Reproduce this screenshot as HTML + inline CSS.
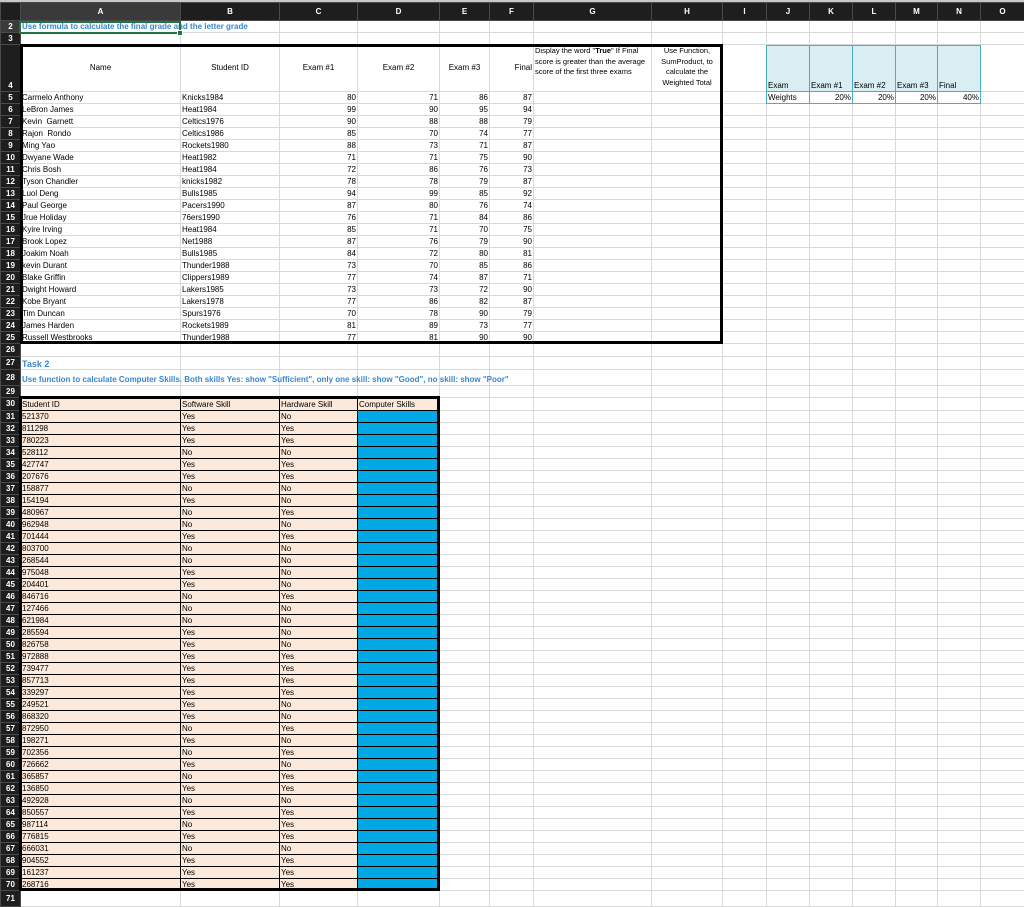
<!DOCTYPE html>
<html><head><meta charset="utf-8"><style>
*{box-sizing:border-box}
body{margin:0;width:1024px;height:904px;overflow:hidden;background:#fff;font-family:"Liberation Sans",sans-serif;font-size:8px;color:#000;position:relative}
table{border-collapse:collapse;table-layout:fixed;position:absolute;left:0;top:2px;width:1024px}
td,th{border:1px solid #d9d9d9;padding:0 1px;white-space:nowrap;overflow:visible;line-height:10px;vertical-align:bottom;max-width:0}
th{background:#1e1e1e;color:#fff;font-weight:bold;border-color:#4a4a4a;text-align:center;vertical-align:middle}
tr.h th{height:18px}
tr{height:12px}
tr.t1 td:nth-child(4),tr.t1 td:nth-child(5),tr.t1 td:nth-child(6),tr.t1 td:nth-child(7){text-align:right}
td.p{background:#fde9d9;border-color:#000}
td.b{background:#00a8e6;border-color:#000}
td.c{background:#d9eef3;border-color:#4bacc6;vertical-align:bottom}
td.w{border-color:#4bacc6}
td.r{text-align:right}
.blue{color:#3a86cc;font-weight:bold}
.box{position:absolute;border:3px solid #000}
</style></head><body>
<div style="position:absolute;left:0;top:0;width:1024px;height:2px;background:#c8c8c8"></div>
<table>
<colgroup><col style="width:20px"><col style="width:160px"><col style="width:99px"><col style="width:78px"><col style="width:82px"><col style="width:50px"><col style="width:44px"><col style="width:118px"><col style="width:71px"><col style="width:44px"><col style="width:43px"><col style="width:43px"><col style="width:43px"><col style="width:42px"><col style="width:43px"><col style="width:44px"></colgroup>
<tr class="h"><th></th><th style="background:#3a3a3a">A</th><th>B</th><th>C</th><th>D</th><th>E</th><th>F</th><th>G</th><th>H</th><th>I</th><th>J</th><th>K</th><th>L</th><th>M</th><th>N</th><th>O</th></tr>
<tr><th style="background:#3a3a3a">2</th><td class="blue">Use formula to calculate the final grade and the letter grade</td><td></td><td></td><td></td><td></td><td></td><td></td><td></td><td></td><td></td><td></td><td></td><td></td><td></td><td></td></tr>
<tr><th>3</th><td></td><td></td><td></td><td></td><td></td><td></td><td></td><td></td><td></td><td></td><td></td><td></td><td></td><td></td><td></td></tr>
<tr style="height:47px"><th style="vertical-align:bottom">4</th><td style="text-align:center;vertical-align:middle">Name</td><td style="text-align:center;vertical-align:middle">Student ID</td><td style="text-align:center;vertical-align:middle">Exam #1</td><td style="text-align:center;vertical-align:middle">Exam #2</td><td style="text-align:center;vertical-align:middle">Exam #3</td><td style="text-align:right;vertical-align:middle">Final</td><td style="white-space:normal;vertical-align:top;line-height:10.5px;padding-top:1px;font-size:7.5px">Display the word "<b>True</b>" If Final score is greater than the average score of the first three exams</td><td style="white-space:normal;text-align:center;vertical-align:top;line-height:10.5px;padding-top:1px;font-size:7.5px">Use Function, SumProduct, to calculate the Weighted Total</td><td></td><td class="c">Exam</td><td class="c">Exam #1</td><td class="c">Exam #2</td><td class="c">Exam #3</td><td class="c">Final</td><td></td></tr>
<tr class="t1"><th>5</th><td>Carmelo Anthony</td><td>Knicks1984</td><td>80</td><td>71</td><td>86</td><td>87</td><td></td><td></td><td></td><td class="w">Weights</td><td class="w r">20%</td><td class="w r">20%</td><td class="w r">20%</td><td class="w r">40%</td><td></td></tr>
<tr class="t1"><th>6</th><td>LeBron James</td><td>Heat1984</td><td>99</td><td>90</td><td>95</td><td>94</td><td></td><td></td><td></td><td></td><td></td><td></td><td></td><td></td><td></td></tr>
<tr class="t1"><th>7</th><td>Kevin &nbsp;Garnett</td><td>Celtics1976</td><td>90</td><td>88</td><td>88</td><td>79</td><td></td><td></td><td></td><td></td><td></td><td></td><td></td><td></td><td></td></tr>
<tr class="t1"><th>8</th><td>Rajon &nbsp;Rondo</td><td>Celtics1986</td><td>85</td><td>70</td><td>74</td><td>77</td><td></td><td></td><td></td><td></td><td></td><td></td><td></td><td></td><td></td></tr>
<tr class="t1"><th>9</th><td>Ming Yao</td><td>Rockets1980</td><td>88</td><td>73</td><td>71</td><td>87</td><td></td><td></td><td></td><td></td><td></td><td></td><td></td><td></td><td></td></tr>
<tr class="t1"><th>10</th><td>Dwyane Wade</td><td>Heat1982</td><td>71</td><td>71</td><td>75</td><td>90</td><td></td><td></td><td></td><td></td><td></td><td></td><td></td><td></td><td></td></tr>
<tr class="t1"><th>11</th><td>Chris Bosh</td><td>Heat1984</td><td>72</td><td>86</td><td>76</td><td>73</td><td></td><td></td><td></td><td></td><td></td><td></td><td></td><td></td><td></td></tr>
<tr class="t1"><th>12</th><td>Tyson Chandler</td><td>knicks1982</td><td>78</td><td>78</td><td>79</td><td>87</td><td></td><td></td><td></td><td></td><td></td><td></td><td></td><td></td><td></td></tr>
<tr class="t1"><th>13</th><td>Luol Deng</td><td>Bulls1985</td><td>94</td><td>99</td><td>85</td><td>92</td><td></td><td></td><td></td><td></td><td></td><td></td><td></td><td></td><td></td></tr>
<tr class="t1"><th>14</th><td>Paul George</td><td>Pacers1990</td><td>87</td><td>80</td><td>76</td><td>74</td><td></td><td></td><td></td><td></td><td></td><td></td><td></td><td></td><td></td></tr>
<tr class="t1"><th>15</th><td>Jrue Holiday</td><td>76ers1990</td><td>76</td><td>71</td><td>84</td><td>86</td><td></td><td></td><td></td><td></td><td></td><td></td><td></td><td></td><td></td></tr>
<tr class="t1"><th>16</th><td>Kyire Irving</td><td>Heat1984</td><td>85</td><td>71</td><td>70</td><td>75</td><td></td><td></td><td></td><td></td><td></td><td></td><td></td><td></td><td></td></tr>
<tr class="t1"><th>17</th><td>Brook Lopez</td><td>Net1988</td><td>87</td><td>76</td><td>79</td><td>90</td><td></td><td></td><td></td><td></td><td></td><td></td><td></td><td></td><td></td></tr>
<tr class="t1"><th>18</th><td>Joakim Noah</td><td>Bulls1985</td><td>84</td><td>72</td><td>80</td><td>81</td><td></td><td></td><td></td><td></td><td></td><td></td><td></td><td></td><td></td></tr>
<tr class="t1"><th>19</th><td>kevin Durant</td><td>Thunder1988</td><td>73</td><td>70</td><td>85</td><td>86</td><td></td><td></td><td></td><td></td><td></td><td></td><td></td><td></td><td></td></tr>
<tr class="t1"><th>20</th><td>Blake Griffin</td><td>Clippers1989</td><td>77</td><td>74</td><td>87</td><td>71</td><td></td><td></td><td></td><td></td><td></td><td></td><td></td><td></td><td></td></tr>
<tr class="t1"><th>21</th><td>Dwight Howard</td><td>Lakers1985</td><td>73</td><td>73</td><td>72</td><td>90</td><td></td><td></td><td></td><td></td><td></td><td></td><td></td><td></td><td></td></tr>
<tr class="t1"><th>22</th><td>Kobe Bryant</td><td>Lakers1978</td><td>77</td><td>86</td><td>82</td><td>87</td><td></td><td></td><td></td><td></td><td></td><td></td><td></td><td></td><td></td></tr>
<tr class="t1"><th>23</th><td>Tim Duncan</td><td>Spurs1976</td><td>70</td><td>78</td><td>90</td><td>79</td><td></td><td></td><td></td><td></td><td></td><td></td><td></td><td></td><td></td></tr>
<tr class="t1"><th>24</th><td>James Harden</td><td>Rockets1989</td><td>81</td><td>89</td><td>73</td><td>77</td><td></td><td></td><td></td><td></td><td></td><td></td><td></td><td></td><td></td></tr>
<tr class="t1"><th>25</th><td>Russell Westbrooks</td><td>Thunder1988</td><td>77</td><td>81</td><td>90</td><td>90</td><td></td><td></td><td></td><td></td><td></td><td></td><td></td><td></td><td></td></tr>
<tr style="height:13px"><th>26</th><td></td><td></td><td></td><td></td><td></td><td></td><td></td><td></td><td></td><td></td><td></td><td></td><td></td><td></td><td></td></tr>
<tr style="height:13px"><th>27</th><td class="blue" style="font-size:9px">Task 2</td><td></td><td></td><td></td><td></td><td></td><td></td><td></td><td></td><td></td><td></td><td></td><td></td><td></td><td></td></tr>
<tr style="height:16px"><th>28</th><td class="blue">Use function to calculate Computer Skills. Both skills Yes: show "Sufficient", only one skill: show "Good", no skill: show "Poor"</td><td></td><td></td><td></td><td></td><td></td><td></td><td></td><td></td><td></td><td></td><td></td><td></td><td></td><td></td></tr>
<tr><th>29</th><td></td><td></td><td></td><td></td><td></td><td></td><td></td><td></td><td></td><td></td><td></td><td></td><td></td><td></td><td></td></tr>
<tr style="height:13px"><th>30</th><td class="p">Student ID</td><td class="p">Software Skill</td><td class="p">Hardware Skill</td><td class="p">Computer Skills</td><td></td><td></td><td></td><td></td><td></td><td></td><td></td><td></td><td></td><td></td><td></td></tr>
<tr><th>31</th><td class="p">521370</td><td class="p">Yes</td><td class="p">No</td><td class="b"></td><td></td><td></td><td></td><td></td><td></td><td></td><td></td><td></td><td></td><td></td><td></td></tr>
<tr><th>32</th><td class="p">811298</td><td class="p">Yes</td><td class="p">Yes</td><td class="b"></td><td></td><td></td><td></td><td></td><td></td><td></td><td></td><td></td><td></td><td></td><td></td></tr>
<tr><th>33</th><td class="p">780223</td><td class="p">Yes</td><td class="p">Yes</td><td class="b"></td><td></td><td></td><td></td><td></td><td></td><td></td><td></td><td></td><td></td><td></td><td></td></tr>
<tr><th>34</th><td class="p">528112</td><td class="p">No</td><td class="p">No</td><td class="b"></td><td></td><td></td><td></td><td></td><td></td><td></td><td></td><td></td><td></td><td></td><td></td></tr>
<tr><th>35</th><td class="p">427747</td><td class="p">Yes</td><td class="p">Yes</td><td class="b"></td><td></td><td></td><td></td><td></td><td></td><td></td><td></td><td></td><td></td><td></td><td></td></tr>
<tr><th>36</th><td class="p">207676</td><td class="p">Yes</td><td class="p">Yes</td><td class="b"></td><td></td><td></td><td></td><td></td><td></td><td></td><td></td><td></td><td></td><td></td><td></td></tr>
<tr><th>37</th><td class="p">158877</td><td class="p">No</td><td class="p">No</td><td class="b"></td><td></td><td></td><td></td><td></td><td></td><td></td><td></td><td></td><td></td><td></td><td></td></tr>
<tr><th>38</th><td class="p">154194</td><td class="p">Yes</td><td class="p">No</td><td class="b"></td><td></td><td></td><td></td><td></td><td></td><td></td><td></td><td></td><td></td><td></td><td></td></tr>
<tr><th>39</th><td class="p">480967</td><td class="p">No</td><td class="p">Yes</td><td class="b"></td><td></td><td></td><td></td><td></td><td></td><td></td><td></td><td></td><td></td><td></td><td></td></tr>
<tr><th>40</th><td class="p">962948</td><td class="p">No</td><td class="p">No</td><td class="b"></td><td></td><td></td><td></td><td></td><td></td><td></td><td></td><td></td><td></td><td></td><td></td></tr>
<tr><th>41</th><td class="p">701444</td><td class="p">Yes</td><td class="p">Yes</td><td class="b"></td><td></td><td></td><td></td><td></td><td></td><td></td><td></td><td></td><td></td><td></td><td></td></tr>
<tr><th>42</th><td class="p">803700</td><td class="p">No</td><td class="p">No</td><td class="b"></td><td></td><td></td><td></td><td></td><td></td><td></td><td></td><td></td><td></td><td></td><td></td></tr>
<tr><th>43</th><td class="p">268544</td><td class="p">No</td><td class="p">No</td><td class="b"></td><td></td><td></td><td></td><td></td><td></td><td></td><td></td><td></td><td></td><td></td><td></td></tr>
<tr><th>44</th><td class="p">975048</td><td class="p">Yes</td><td class="p">No</td><td class="b"></td><td></td><td></td><td></td><td></td><td></td><td></td><td></td><td></td><td></td><td></td><td></td></tr>
<tr><th>45</th><td class="p">204401</td><td class="p">Yes</td><td class="p">No</td><td class="b"></td><td></td><td></td><td></td><td></td><td></td><td></td><td></td><td></td><td></td><td></td><td></td></tr>
<tr><th>46</th><td class="p">846716</td><td class="p">No</td><td class="p">Yes</td><td class="b"></td><td></td><td></td><td></td><td></td><td></td><td></td><td></td><td></td><td></td><td></td><td></td></tr>
<tr><th>47</th><td class="p">127466</td><td class="p">No</td><td class="p">No</td><td class="b"></td><td></td><td></td><td></td><td></td><td></td><td></td><td></td><td></td><td></td><td></td><td></td></tr>
<tr><th>48</th><td class="p">621984</td><td class="p">No</td><td class="p">No</td><td class="b"></td><td></td><td></td><td></td><td></td><td></td><td></td><td></td><td></td><td></td><td></td><td></td></tr>
<tr><th>49</th><td class="p">285594</td><td class="p">Yes</td><td class="p">No</td><td class="b"></td><td></td><td></td><td></td><td></td><td></td><td></td><td></td><td></td><td></td><td></td><td></td></tr>
<tr><th>50</th><td class="p">826758</td><td class="p">Yes</td><td class="p">No</td><td class="b"></td><td></td><td></td><td></td><td></td><td></td><td></td><td></td><td></td><td></td><td></td><td></td></tr>
<tr><th>51</th><td class="p">972888</td><td class="p">Yes</td><td class="p">Yes</td><td class="b"></td><td></td><td></td><td></td><td></td><td></td><td></td><td></td><td></td><td></td><td></td><td></td></tr>
<tr><th>52</th><td class="p">739477</td><td class="p">Yes</td><td class="p">Yes</td><td class="b"></td><td></td><td></td><td></td><td></td><td></td><td></td><td></td><td></td><td></td><td></td><td></td></tr>
<tr><th>53</th><td class="p">857713</td><td class="p">Yes</td><td class="p">Yes</td><td class="b"></td><td></td><td></td><td></td><td></td><td></td><td></td><td></td><td></td><td></td><td></td><td></td></tr>
<tr><th>54</th><td class="p">339297</td><td class="p">Yes</td><td class="p">Yes</td><td class="b"></td><td></td><td></td><td></td><td></td><td></td><td></td><td></td><td></td><td></td><td></td><td></td></tr>
<tr><th>55</th><td class="p">249521</td><td class="p">Yes</td><td class="p">No</td><td class="b"></td><td></td><td></td><td></td><td></td><td></td><td></td><td></td><td></td><td></td><td></td><td></td></tr>
<tr><th>56</th><td class="p">868320</td><td class="p">Yes</td><td class="p">No</td><td class="b"></td><td></td><td></td><td></td><td></td><td></td><td></td><td></td><td></td><td></td><td></td><td></td></tr>
<tr><th>57</th><td class="p">872950</td><td class="p">No</td><td class="p">Yes</td><td class="b"></td><td></td><td></td><td></td><td></td><td></td><td></td><td></td><td></td><td></td><td></td><td></td></tr>
<tr><th>58</th><td class="p">198271</td><td class="p">Yes</td><td class="p">No</td><td class="b"></td><td></td><td></td><td></td><td></td><td></td><td></td><td></td><td></td><td></td><td></td><td></td></tr>
<tr><th>59</th><td class="p">702356</td><td class="p">No</td><td class="p">Yes</td><td class="b"></td><td></td><td></td><td></td><td></td><td></td><td></td><td></td><td></td><td></td><td></td><td></td></tr>
<tr><th>60</th><td class="p">726662</td><td class="p">Yes</td><td class="p">No</td><td class="b"></td><td></td><td></td><td></td><td></td><td></td><td></td><td></td><td></td><td></td><td></td><td></td></tr>
<tr><th>61</th><td class="p">365857</td><td class="p">No</td><td class="p">Yes</td><td class="b"></td><td></td><td></td><td></td><td></td><td></td><td></td><td></td><td></td><td></td><td></td><td></td></tr>
<tr><th>62</th><td class="p">136850</td><td class="p">Yes</td><td class="p">Yes</td><td class="b"></td><td></td><td></td><td></td><td></td><td></td><td></td><td></td><td></td><td></td><td></td><td></td></tr>
<tr><th>63</th><td class="p">492928</td><td class="p">No</td><td class="p">No</td><td class="b"></td><td></td><td></td><td></td><td></td><td></td><td></td><td></td><td></td><td></td><td></td><td></td></tr>
<tr><th>64</th><td class="p">850557</td><td class="p">Yes</td><td class="p">Yes</td><td class="b"></td><td></td><td></td><td></td><td></td><td></td><td></td><td></td><td></td><td></td><td></td><td></td></tr>
<tr><th>65</th><td class="p">987114</td><td class="p">No</td><td class="p">Yes</td><td class="b"></td><td></td><td></td><td></td><td></td><td></td><td></td><td></td><td></td><td></td><td></td><td></td></tr>
<tr><th>66</th><td class="p">776815</td><td class="p">Yes</td><td class="p">Yes</td><td class="b"></td><td></td><td></td><td></td><td></td><td></td><td></td><td></td><td></td><td></td><td></td><td></td></tr>
<tr><th>67</th><td class="p">666031</td><td class="p">No</td><td class="p">No</td><td class="b"></td><td></td><td></td><td></td><td></td><td></td><td></td><td></td><td></td><td></td><td></td><td></td></tr>
<tr><th>68</th><td class="p">904552</td><td class="p">Yes</td><td class="p">Yes</td><td class="b"></td><td></td><td></td><td></td><td></td><td></td><td></td><td></td><td></td><td></td><td></td><td></td></tr>
<tr><th>69</th><td class="p">161237</td><td class="p">Yes</td><td class="p">Yes</td><td class="b"></td><td></td><td></td><td></td><td></td><td></td><td></td><td></td><td></td><td></td><td></td><td></td></tr>
<tr><th>70</th><td class="p">268716</td><td class="p">Yes</td><td class="p">Yes</td><td class="b"></td><td></td><td></td><td></td><td></td><td></td><td></td><td></td><td></td><td></td><td></td><td></td></tr>
<tr style="height:16px"><th>71</th><td></td><td></td><td></td><td></td><td></td><td></td><td></td><td></td><td></td><td></td><td></td><td></td><td></td><td></td><td></td></tr>
</table>
<div class="box" style="left:20px;top:44px;width:703px;height:300px"></div>
<div class="box" style="left:19px;top:396px;width:421px;height:495px"></div>
<div style="position:absolute;left:766px;top:45px;width:1px;height:59px;background:#4bacc6"></div>
<div style="position:absolute;left:766px;top:45px;width:215px;height:1px;background:#4bacc6"></div>
<div style="position:absolute;left:19px;top:21px;width:162px;height:13px;border:2px solid #217346"></div>
<div style="position:absolute;left:177px;top:30px;width:6px;height:6px;background:#217346;border:1px solid #fff"></div>
</body></html>
